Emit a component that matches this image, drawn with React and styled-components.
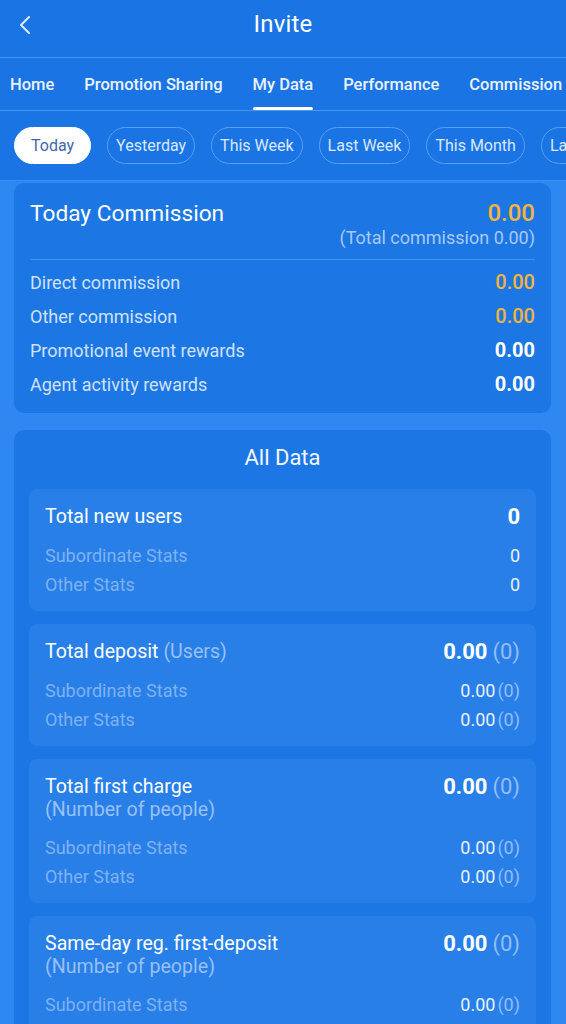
import React from "react";
import styled, { createGlobalStyle } from "styled-components";

const Global = createGlobalStyle`
  * { box-sizing: border-box; }
  html, body { margin: 0; padding: 0; }
  body {
    background: #2f87f1;
    font-family: Roboto, "Noto Sans", "Liberation Sans", sans-serif;
    color: #fff;
    -webkit-font-smoothing: antialiased;
  }
`;

const Page = styled.div`
  width: 566px;
  height: 1024px;
  background: #2f87f1;
  overflow: hidden;
`;

const Top = styled.div`
  background: #1b74e3;
`;

const NavBar = styled.div`
  height: 58px;
  display: flex;
  align-items: center;
  justify-content: center;
  position: relative;
  border-bottom: 1.5px solid #4b98f2;
`;

const BackBtn = styled.div`
  position: absolute;
  left: 16px;
  top: 14px;
  width: 18px;
  height: 22px;
  display: flex;
  align-items: center;
  justify-content: center;
`;

const Title = styled.h1`
  margin: 0;
  font-size: 24px;
  font-weight: 400;
  color: #fff;
  letter-spacing: 0.2px;
  margin-top: -10px;
`;

const Tabs = styled.div`
  height: 53px;
  display: flex;
  align-items: stretch;
  gap: 30px;
  padding-left: 10px;
  white-space: nowrap;
  overflow: hidden;
  border-bottom: 1.5px solid #4b98f2;
`;

const Tab = styled.div`
  position: relative;
  display: flex;
  align-items: center;
  font-size: 16.5px;
  font-weight: 500;
  color: #e9f2ff;
  flex-shrink: 0;
  &::after {
    content: "";
    display: ${(p) => (p.$active ? "block" : "none")};
    position: absolute;
    left: 0;
    right: 0;
    bottom: 0;
    height: 3px;
    border-radius: 2px;
    background: #fff;
  }
`;

const Chips = styled.div`
  display: flex;
  gap: 16px;
  padding: 16px 0 16px 14px;
  white-space: nowrap;
  overflow: hidden;
  border-bottom: 1.5px solid #3f8ff0;
`;

const Chip = styled.div`
  flex-shrink: 0;
  height: 37px;
  padding: 0 ${(p) => (p.$active ? "16px" : "8px")};
  border-radius: 19px;
  display: flex;
  align-items: center;
  font-size: 16px;
  color: ${(p) => (p.$active ? "#4266a8" : "#d9e8fd")};
  background: ${(p) => (p.$active ? "#fff" : "transparent")};
  border: 1.5px solid ${(p) => (p.$active ? "#fff" : "#5aa0f3")};
`;

const Content = styled.div`
  display: flex;
  flex-direction: column;
  gap: 17px;
  padding: 2px 15px 0 14px;
`;

const Card = styled.section`
  background: #1c76e3;
  border-radius: 10px;
  padding: ${(p) => p.$pad};
`;

const CommHead = styled.div`
  display: flex;
  justify-content: space-between;
  align-items: center;
  height: 28px;
`;

const CommTitle = styled.div`
  font-size: 22.7px;
  color: #fff;
`;

const Gold = styled.span`
  color: #f2b43e;
  font-size: ${(p) => p.$size || 20}px;
  font-weight: 500;
`;

const SubTotal = styled.div`
  text-align: right;
  font-size: 18px;
  line-height: 22px;
  color: #a8c9f7;
`;

const Divider = styled.div`
  height: 1px;
  background: #4592ef;
  margin: 10px 0 5px;
`;

const CommRow = styled.div`
  height: 34px;
  display: flex;
  justify-content: space-between;
  align-items: center;
`;

const CommLabel = styled.span`
  font-size: 18px;
  color: #d0e2fb;
`;

const WhiteVal = styled.span`
  font-size: 20px;
  font-weight: 700;
  color: #fff;
`;

const AllTitle = styled.div`
  height: 28px;
  text-align: center;
  font-size: 22px;
  line-height: 28px;
  color: #f2f7ff;
  margin-bottom: 17px;
`;

const StatList = styled.div`
  display: flex;
  flex-direction: column;
  gap: 13.5px;
`;

const StatCard = styled.div`
  background: #287fe8;
  border-radius: 8px;
  padding: 16px 16px 11.5px;
`;

const StatHead = styled.div`
  display: flex;
  justify-content: space-between;
  align-items: flex-start;
  margin-bottom: 12px;
`;

const StatName = styled.div`
  font-size: 19.6px;
  line-height: 24px;
  color: #fff;
`;

const Faded = styled.span`
  color: #98c0f6;
`;

const StatSub = styled.div`
  font-size: 19.6px;
  line-height: 22px;
  color: #98c0f6;
`;

const BigNum = styled.div`
  font-size: 22px;
  line-height: 24px;
  font-weight: 700;
  color: #fff;
  white-space: nowrap;
`;

const Paren = styled.span`
  font-weight: 400;
  color: #94bdf6;
  margin-left: ${(p) => p.$gap || 5}px;
`;

const SubRow = styled.div`
  height: 29px;
  display: flex;
  justify-content: space-between;
  align-items: center;
`;

const SubLabel = styled.span`
  font-size: 18px;
  color: #7fb1f2;
`;

const SubVal = styled.span`
  font-size: 18px;
  color: #e9f2ff;
`;

const Back = () => (
  <svg width="14" height="20" viewBox="0 0 14 20" fill="none">
    <polyline points="11,2 3,10 11,18" stroke="#dfeaff" strokeWidth="2" strokeLinecap="round" strokeLinejoin="round" />
  </svg>
);

const tabs = ["Home", "Promotion Sharing", "My Data", "Performance", "Commission", "Subordinate"];
const chips = ["Today", "Yesterday", "This Week", "Last Week", "This Month", "Last Month"];

const commRows = [
  { label: "Direct commission", gold: true },
  { label: "Other commission", gold: true },
  { label: "Promotional event rewards" },
  { label: "Agent activity rewards" },
];

const stats = [
  { name: "Total new users", plain: true },
  { name: "Total deposit", suffix: "(Users)" },
  { name: "Total first charge", sub: "(Number of people)" },
  { name: "Same-day reg. first-deposit", sub: "(Number of people)" },
];

function StatBlock({ s }) {
  return (
    <StatCard>
      <StatHead>
        <div>
          <StatName>
            {s.name}
            {s.suffix && <Faded> {s.suffix}</Faded>}
          </StatName>
          {s.sub && <StatSub>{s.sub}</StatSub>}
        </div>
        <BigNum>
          {s.plain ? "0" : "0.00"}
          {!s.plain && <Paren>(0)</Paren>}
        </BigNum>
      </StatHead>
      {["Subordinate Stats", "Other Stats"].map((l) => (
        <SubRow key={l}>
          <SubLabel>{l}</SubLabel>
          <SubVal>
            {s.plain ? "0" : "0.00"}
            {!s.plain && <Paren $gap={2}>(0)</Paren>}
          </SubVal>
        </SubRow>
      ))}
    </StatCard>
  );
}

export default function App() {
  return (
    <Page>
      <Global />
      <Top>
        <NavBar>
          <BackBtn>
            <Back />
          </BackBtn>
          <Title>Invite</Title>
        </NavBar>
        <Tabs>
          {tabs.map((t) => (
            <Tab key={t} $active={t === "My Data"}>
              {t}
            </Tab>
          ))}
        </Tabs>
        <Chips>
          {chips.map((c) => (
            <Chip key={c} $active={c === "Today"}>
              {c}
            </Chip>
          ))}
        </Chips>
      </Top>
      <Content>
        <Card $pad="16px 16px 12px">
          <CommHead>
            <CommTitle>Today Commission</CommTitle>
            <Gold $size={24}>0.00</Gold>
          </CommHead>
          <SubTotal>(Total commission 0.00)</SubTotal>
          <Divider />
          {commRows.map((r) => (
            <CommRow key={r.label}>
              <CommLabel>{r.label}</CommLabel>
              {r.gold ? <Gold>0.00</Gold> : <WhiteVal>0.00</WhiteVal>}
            </CommRow>
          ))}
        </Card>
        <Card $pad="14px 15px 15px">
          <AllTitle>All Data</AllTitle>
          <StatList>
            {stats.map((s) => (
              <StatBlock key={s.name} s={s} />
            ))}
          </StatList>
        </Card>
      </Content>
    </Page>
  );
}
